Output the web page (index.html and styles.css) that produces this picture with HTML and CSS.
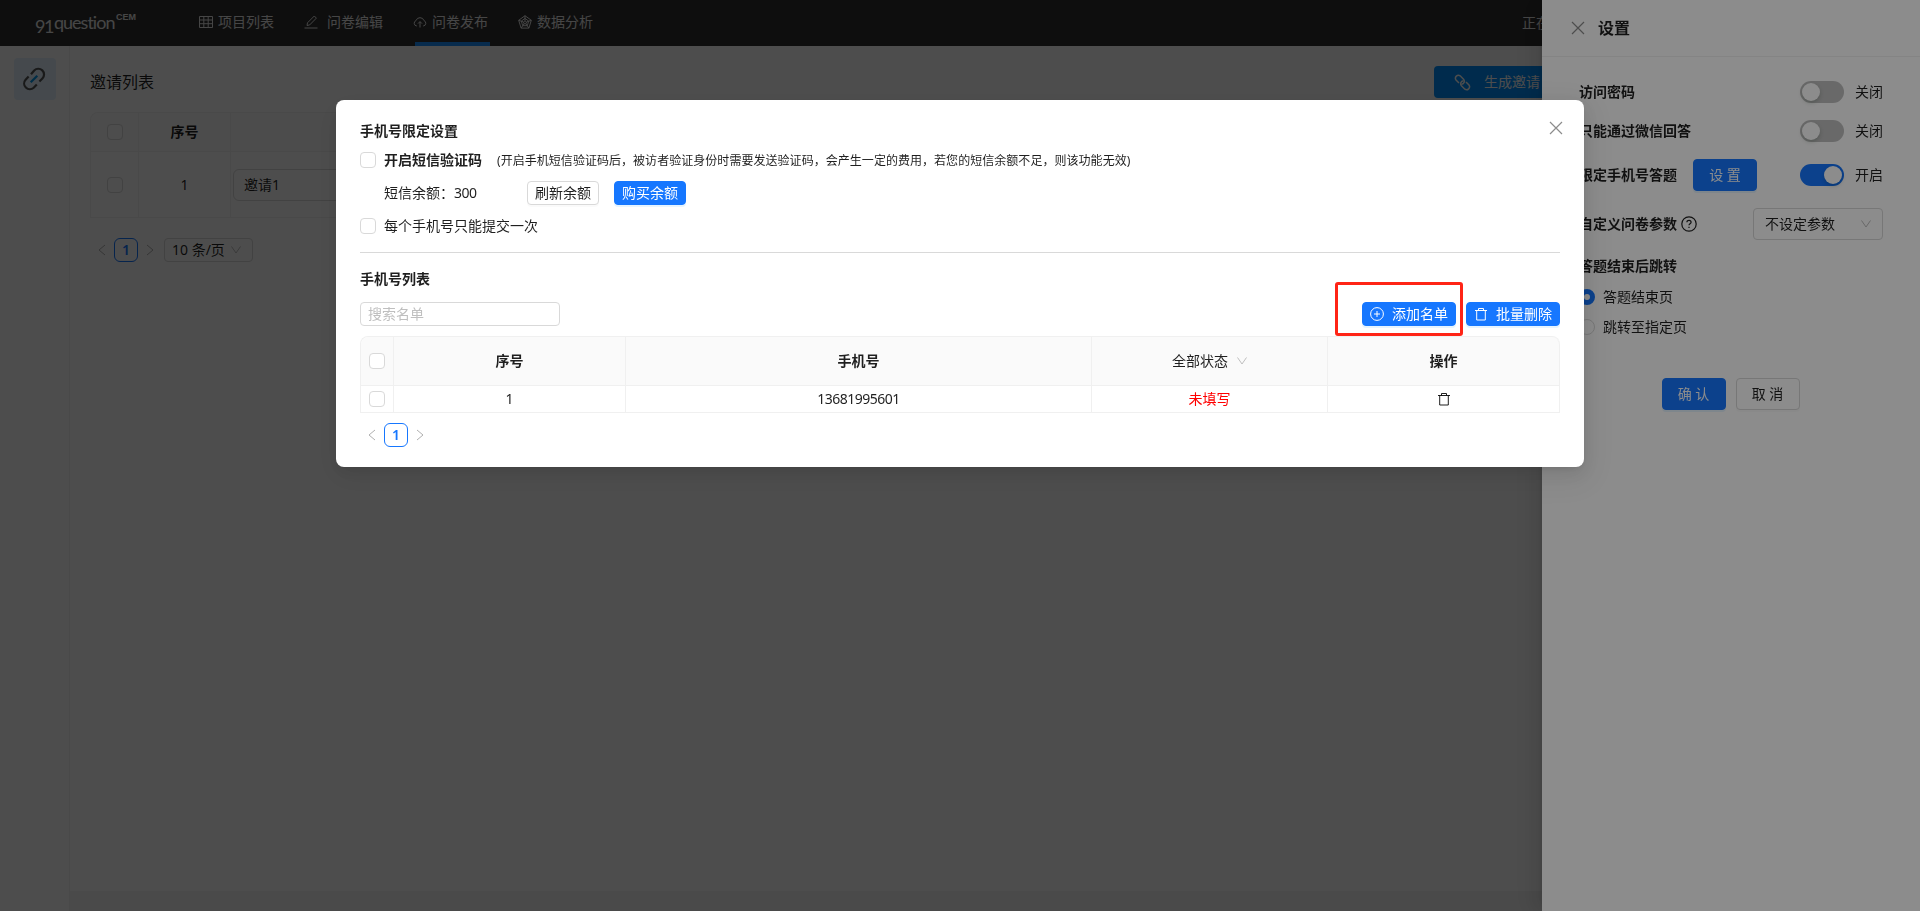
FILE: index.html
```
<!DOCTYPE html>
<html lang="zh-CN">
  <head>
    <meta charset="utf-8">
    <title>问卷发布</title>
    <link rel="stylesheet" href="styles.css">
  </head>
  <body>
    <div class="page">
      <header class="nav">
        <div class="logo"><span class="logo-num">91</span><span class="logo-word">question</span><span class="logo-sup">CEM</span></div>
        <div class="nav-item">
          <svg class="icon" viewBox="0 0 14 14"><path d="M.5 1.5h13v11H.5zM.5 5h13M.5 8.700h13M4.800 1.500v11M9.200 1.500v11"/></svg>
          <span>项目列表</span>
        </div>
        <div class="nav-item nav-edit">
          <svg class="icon" viewBox="0 0 14 14"><path d="M.5 13h13M3 10.500l.5-2.700L10.300 1l2.100 2.100-6.700 6.800z"/></svg>
          <span>问卷编辑</span>
        </div>
        <div class="nav-item active">
          <svg class="icon" viewBox="0 0 14 14"><path d="M3.800 11A2.800 2.800 0 0 1 3 5.600a4.200 4.200 0 0 1 8 0A2.800 2.800 0 0 1 10.200 11M7 12.500V6.800M5 8.600l2-2 2 2"/></svg>
          <span>问卷发布</span>
        </div>
        <div class="nav-item nav-data">
          <svg class="icon" viewBox="0 0 14 14"><path d="M7 .7l6.300 4.600-2.400 7.800H3.100L.7 5.300zM7 3.400l3.700 2.700-1.400 4.600H4.700L3.300 6.100zM7 5.800l1.500 1.200-.6 1.800H6.100L5.500 7zM7 .7v5M.7 5.300L5.500 7M13.300 5.300L8.500 7M3.100 13.100l3-4.300M10.900 13.100l-3-4.300"/></svg>
          <span>数据分析</span>
        </div>
        <div class="nav-status">正在收集</div>
      </header>
      <div class="layout">
        <aside class="side">
          <div class="side-item">
            <svg viewBox="0 0 24 24">
              <path class="chain" d="M9 7.200l3.200-3.700a5.700 5.700 0 0 1 8.200 8l-3 3M6.600 9.600l-3 3.100a5.700 5.700 0 0 0 8.100 8l3.100-3.200"/>
              <path class="chain-mid" d="M8.700 15.300l6.600-6.600"/>
            </svg>
          </div>
        </aside>
        <main class="content">
          <div class="content-head">
            <h2>邀请列表</h2>
            <div class="create-btn">
              <svg viewBox="0 0 16 16"><path d="M4.700 8.400L1.900 5.600A2.800 2.800 0 0 1 5.800 1.700L9 4.900a2.800 2.800 0 0 1-1.800 4.700M11.300 7.600l2.800 2.800a2.800 2.800 0 0 1-3.900 3.900L7 11.100a2.800 2.800 0 0 1 1.800-4.700"/></svg>
              <span>生成邀请</span>
            </div>
          </div>
          <div class="invite-table">
            <div class="cell head"><span class="checkbox"></span></div>
            <div class="cell head">序号</div>
            <div class="cell head"></div>
            <div class="cell"><span class="checkbox"></span></div>
            <div class="cell">1</div>
            <div class="cell name-cell"><div class="name-input">邀请1</div></div>
          </div>
          <div class="pagination">
            <svg class="arrow" viewBox="0 0 10 12"><path d="M8 1L2 6l6 5"/></svg>
            <span class="page-num">1</span>
            <svg class="arrow" viewBox="0 0 10 12"><path d="M2 1l6 5-6 5"/></svg>
            <div class="size-select"><span>10 条/页</span><svg class="down" viewBox="0 0 12 12"><path d="M1.500 2.500L6 9l4.500-6.500"/></svg></div>
          </div>
        </main>
      </div>
    </div>

    <div class="mask"></div>
    <div class="drawer">
      <div class="drawer-head">
        <svg class="close" viewBox="0 0 14 14"><path d="M1 1l12 12M13 1L1 13"/></svg>
        <span>设置</span>
      </div>
      <div class="drawer-body">
        <div class="row row-pwd"><b>访问密码</b><span class="switch"></span><span class="state">关闭</span></div>
        <div class="row row-wx"><b>只能通过微信回答</b><span class="switch"></span><span class="state">关闭</span></div>
        <div class="row row-phone"><b>限定手机号答题</b><span class="btn primary">设 置</span><span class="switch on"></span><span class="state">开启</span></div>
        <div class="row row-param">
          <b>自定义问卷参数</b>
          <svg class="help" viewBox="0 0 16 16"><circle cx="8" cy="8" r="7.200"/><path d="M5.900 6.300c0-2.700 4.200-2.600 4.200-.1 0 1.500-2.100 1.600-2.100 3.100"/><path d="M8 10.700v1.200"/></svg>
          <div class="param-select"><span>不设定参数</span><svg class="down" viewBox="0 0 12 12"><path d="M1.500 2.500L6 9l4.500-6.500"/></svg></div>
        </div>
        <div class="row row-jump"><b>答题结束后跳转</b></div>
        <div class="row row-radio"><span class="radio checked"></span>答题结束页</div>
        <div class="row row-radio"><span class="radio"></span>跳转至指定页</div>
        <div class="drawer-foot"><span class="btn primary">确 认</span><span class="btn">取 消</span></div>
      </div>
    </div>

    <div class="mask"></div>
    <div class="modal">
      <svg class="close modal-close" viewBox="0 0 14 14"><path d="M1 1l12 12M13 1L1 13"/></svg>
      <h3>手机号限定设置</h3>
      <div class="option"><span class="checkbox"></span><b>开启短信验证码</b><span class="note">(开启手机短信验证码后，被访者验证身份时需要发送验证码，会产生一定的费用，若您的短信余额不足，则该功能无效)</span></div>
      <div class="balance"><span class="balance-text">短信余额：<span class="num">300</span></span><span class="btn small">刷新余额</span><span class="btn small primary">购买余额</span></div>
      <div class="option"><span class="checkbox"></span>每个手机号只能提交一次</div>
      <div class="divider"></div>
      <h3>手机号列表</h3>
      <div class="toolbar">
        <input class="search" placeholder="搜索名单">
        <div class="add-wrap">
          <span class="btn small primary"><svg class="icon" viewBox="0 0 14 14"><circle cx="7" cy="7" r="6.400"/><path d="M7 4v6M4 7h6"/></svg>添加名单</span>
          <span class="highlight"></span>
        </div>
        <span class="btn small primary"><svg class="icon" viewBox="0 0 14 14"><path d="M1 3.500h12M4.500 3.500v-2h5v2M2.700 3.500v9.500h8.600V3.500"/></svg>批量删除</span>
      </div>
      <div class="phone-table">
        <div class="cell head"><span class="checkbox"></span></div>
        <div class="cell head">序号</div>
        <div class="cell head">手机号</div>
        <div class="cell head filter">全部状态<svg class="down" viewBox="0 0 12 12"><path d="M1.500 2.500L6 9l4.500-6.500"/></svg></div>
        <div class="cell head">操作</div>
        <div class="cell"><span class="checkbox"></span></div>
        <div class="cell">1</div>
        <div class="cell"><span class="num">13681995601</span></div>
        <div class="cell empty">未填写</div>
        <div class="cell"><svg class="icon" viewBox="0 0 14 14"><path d="M1 3.500h12M4.500 3.500v-2h5v2M2.700 3.500v9.500h8.600V3.500"/></svg></div>
      </div>
      <div class="pagination">
        <svg class="arrow" viewBox="0 0 10 12"><path d="M8 1L2 6l6 5"/></svg>
        <span class="page-num">1</span>
        <svg class="arrow" viewBox="0 0 10 12"><path d="M2 1l6 5-6 5"/></svg>
      </div>
    </div>
  </body>
</html>
```
FILE: styles.css
```
* {
  box-sizing: border-box;
}
body {
  margin: 0;
  height: 911px;
  overflow: hidden;
  background: #f5f5f5;
  color: rgba(0, 0, 0, 0.88);
  font-family: "Noto Sans", "Noto Sans CJK SC", sans-serif;
  font-size: 14px;
  line-height: 22px;
}
svg {
  flex: none;
  fill: none;
  stroke: currentColor;
}
h2,
h3 {
  margin: 0;
}
b,
h3 {
  font-weight: 600;
}

/* top nav */
.nav {
  display: flex;
  height: 46px;
  padding-left: 35px;
  background: #2f2f2f;
  color: #e6e6e6;
  overflow: hidden;
  white-space: nowrap;
}
.logo {
  display: flex;
  width: 164px;
  font-family: Lato, sans-serif;
  font-size: 18px;
}
.logo-num {
  width: 19px;
  padding-top: 15px;
  letter-spacing: -1.5px;
}
.logo-word {
  width: 62px;
  padding-top: 11px;
  letter-spacing: -1px;
}
.logo-sup {
  padding-top: 6px;
  font-family: "Liberation Sans", sans-serif;
  font-size: 9px;
  font-weight: bold;
}
.nav-item {
  display: flex;
  align-items: center;
  gap: 5px;
  width: 75px;
  height: 46px;
  margin-right: 30px;
  padding-bottom: 3px;
}
.nav-edit {
  gap: 9px;
  width: 79px;
}
.active {
  position: relative;
}
.active::after {
  content: "";
  position: absolute;
  left: 2px;
  bottom: 0;
  width: 75px;
  height: 4px;
  background: #1890ff;
}
.icon {
  width: 14px;
  height: 14px;
}
.nav-status {
  margin: 12px 0 0 auto;
  width: 398px;
}

/* page content */
.layout {
  display: flex;
  height: 865px;
}
.side {
  width: 70px;
  padding: 12px 14px;
  background: #fff;
  border-right: 1px solid #f0f0f0;
}
.side-item {
  display: flex;
  align-items: center;
  justify-content: center;
  width: 42px;
  height: 42px;
  padding-right: 2px;
  border-radius: 4px;
  background: #e3f1fd;
}
.side-item svg {
  width: 24px;
  height: 24px;
  stroke-width: 2.2;
}
.chain {
  stroke: #555;
}
.chain-mid {
  stroke: #0095e8;
}
.content {
  flex: 1;
  height: 845px;
  padding: 20px 20px 0;
  background: #fff;
}
.content-head {
  display: flex;
  justify-content: space-between;
  height: 46px;
}
.content-head h2 {
  font-size: 16px;
  font-weight: 400;
  line-height: 32px;
}
.create-btn {
  display: flex;
  align-items: center;
  gap: 13px;
  width: 466px;
  height: 32px;
  padding-left: 20px;
  border-radius: 4px;
  background: #0090ff;
  color: #fff;
}
.create-btn svg {
  width: 17px;
  height: 17px;
  stroke-width: 1.4;
}
.invite-table {
  display: grid;
  grid-template-columns: 48px 92px 1fr;
  grid-template-rows: 39px 66px;
  border: 1px solid #f0f0f0;
  border-width: 1px 0 0 1px;
  border-radius: 8px 8px 0 0;
}
.cell {
  display: flex;
  align-items: center;
  justify-content: center;
  border-right: 1px solid #f0f0f0;
  border-bottom: 1px solid #f0f0f0;
}
.cell.head {
  background: #fafafa;
  font-weight: 600;
}
.cell.head:first-child {
  border-top-left-radius: 8px;
}
.checkbox {
  flex: none;
  width: 16px;
  height: 16px;
  border: 1px solid #d9d9d9;
  border-radius: 4px;
  background: #fff;
}
.name-cell {
  justify-content: flex-start;
  padding-left: 2px;
}
.name-input {
  width: 500px;
  padding: 4px 10px;
  border: 1px solid #d9d9d9;
  border-radius: 6px;
}
.pagination {
  display: flex;
  align-items: center;
  height: 24px;
}
.content .pagination {
  margin-top: 20px;
}
.arrow {
  width: 10px;
  height: 12px;
  margin: 0 7px;
  color: #b0b0b0;
}
.page-num {
  width: 24px;
  height: 24px;
  border: 1px solid #1677ff;
  border-radius: 6px;
  color: #1677ff;
  font-weight: 600;
  text-align: center;
}
.size-select {
  display: flex;
  align-items: center;
  justify-content: space-between;
  width: 89px;
  height: 24px;
  margin-left: 2px;
  padding: 0 10px 0 7px;
  border: 1px solid #d9d9d9;
  border-radius: 4px;
}
.down {
  width: 12px;
  height: 12px;
  color: #bfbfbf;
}

.mask {
  position: fixed;
  inset: 0;
  background: rgba(0, 0, 0, 0.45);
}

/* settings drawer */
.drawer {
  position: fixed;
  top: 0;
  right: 0;
  width: 378px;
  height: 100%;
  background: #fff;
  box-shadow: -6px 0 16px 0 rgba(0, 0, 0, 0.08), -3px 0 6px -4px rgba(0, 0, 0, 0.12), -9px 0 28px 8px rgba(0, 0, 0, 0.05);
}
.drawer-head {
  display: flex;
  align-items: center;
  gap: 13px;
  height: 57px;
  padding-left: 29px;
  border-bottom: 1px solid #f0f0f0;
  font-size: 16px;
  font-weight: 600;
}
.close {
  width: 14px;
  height: 14px;
  color: #8c8c8c;
  stroke-width: 1.2;
}
.drawer-body {
  padding: 15px 37px;
}
.row {
  display: flex;
  align-items: center;
}
.row-pwd,
.row-wx {
  height: 39px;
}
.row-phone {
  height: 49px;
}
.row-param {
  height: 49px;
}
.row-jump {
  height: 36px;
}
.row-radio {
  height: 30px;
  gap: 8px;
}
.row-jump + .row-radio {
  margin-top: -2px;
}
.row-phone .btn {
  margin-left: 16px;
}
.switch {
  width: 44px;
  height: 22px;
  margin-left: auto;
  padding: 2px;
  border-radius: 11px;
  background: rgba(0, 0, 0, 0.25);
}
.switch::before {
  content: "";
  display: block;
  width: 18px;
  height: 18px;
  border-radius: 9px;
  background: #fff;
  box-shadow: 0 2px 4px rgba(0, 35, 11, 0.2);
}
.switch.on {
  background: #1677ff;
}
.switch.on::before {
  margin-left: 22px;
}
.state {
  margin-left: 11px;
}
.help {
  width: 16px;
  height: 16px;
  margin-left: 4px;
  stroke-width: 1.2;
}
.param-select {
  display: flex;
  align-items: center;
  justify-content: space-between;
  width: 130px;
  height: 32px;
  margin-left: auto;
  padding: 0 10px 0 11px;
  border: 1px solid #d9d9d9;
  border-radius: 4px;
}
.radio {
  width: 16px;
  height: 16px;
  border: 1px solid #d9d9d9;
  border-radius: 50%;
}
.radio.checked {
  border: 5px solid #1677ff;
}
.drawer-foot {
  display: flex;
  justify-content: center;
  gap: 10px;
  margin-top: 36px;
  padding-right: 1px;
}
.btn {
  display: flex;
  align-items: center;
  justify-content: center;
  width: 64px;
  height: 32px;
  border: 1px solid #d9d9d9;
  border-radius: 4px;
  background: #fff;
  box-shadow: 0 2px 0 rgba(0, 0, 0, 0.02);
  white-space: nowrap;
}
.btn.primary {
  border-color: #1677ff;
  background: #1677ff;
  box-shadow: 0 2px 0 rgba(5, 145, 255, 0.1);
  color: #fff;
}
.btn.small {
  width: 72px;
  height: 24px;
}

/* phone limit modal */
.modal {
  position: fixed;
  top: 100px;
  left: 336px;
  width: 1248px;
  height: 367px;
  padding: 20px 24px;
  border-radius: 8px;
  background: #fff;
  box-shadow: 0 6px 16px 0 rgba(0, 0, 0, 0.08), 0 3px 6px -4px rgba(0, 0, 0, 0.12), 0 9px 28px 8px rgba(0, 0, 0, 0.05);
}
.modal-close {
  position: absolute;
  top: 21px;
  right: 21px;
}
.modal h3 {
  font-size: 14px;
  line-height: 22px;
}
.option {
  display: flex;
  align-items: center;
  gap: 8px;
  height: 36px;
}
.note {
  margin-left: 7px;
  padding-top: 2px;
  font-size: 12px;
  letter-spacing: 0.04px;
  white-space: nowrap;
}
.balance {
  display: flex;
  align-items: center;
  height: 30px;
  padding-left: 24px;
}
.balance-text {
  width: 143px;
}
.balance .primary {
  margin-left: 15px;
}
.num {
  letter-spacing: -0.5px;
}
.divider {
  height: 1px;
  margin: 8px 0 15px;
  background: #d9d9d9;
}
.toolbar {
  display: flex;
  align-items: center;
  height: 24px;
  margin: 12px 0 10px;
}
.search {
  width: 200px;
  height: 24px;
  margin-right: auto;
  padding: 0 7px 1px;
  border: 1px solid #d9d9d9;
  border-radius: 4px;
  font: inherit;
}
.search::placeholder {
  color: #bfbfbf;
}
.toolbar .btn {
  gap: 8px;
  width: 94px;
}
.add-wrap {
  position: relative;
  margin-right: 10px;
}
.highlight {
  position: absolute;
  top: -20px;
  right: -7px;
  z-index: 1;
  width: 128px;
  height: 54px;
  border: 3px solid #ff2416;
  border-radius: 3px;
}
.phone-table {
  display: grid;
  grid-template-columns: 33px 232px 466px 236px 1fr;
  grid-template-rows: 49px 27px;
  border: 1px solid #f0f0f0;
  border-width: 1px 0 0 1px;
  border-radius: 8px 8px 0 0;
}
.phone-table .head:nth-child(5) {
  border-top-right-radius: 8px;
}
.cell.filter {
  gap: 8px;
  padding-left: 1px;
  font-weight: 400;
}
.cell.empty {
  color: #f00;
}
.modal .pagination {
  margin-top: 10px;
}
```
